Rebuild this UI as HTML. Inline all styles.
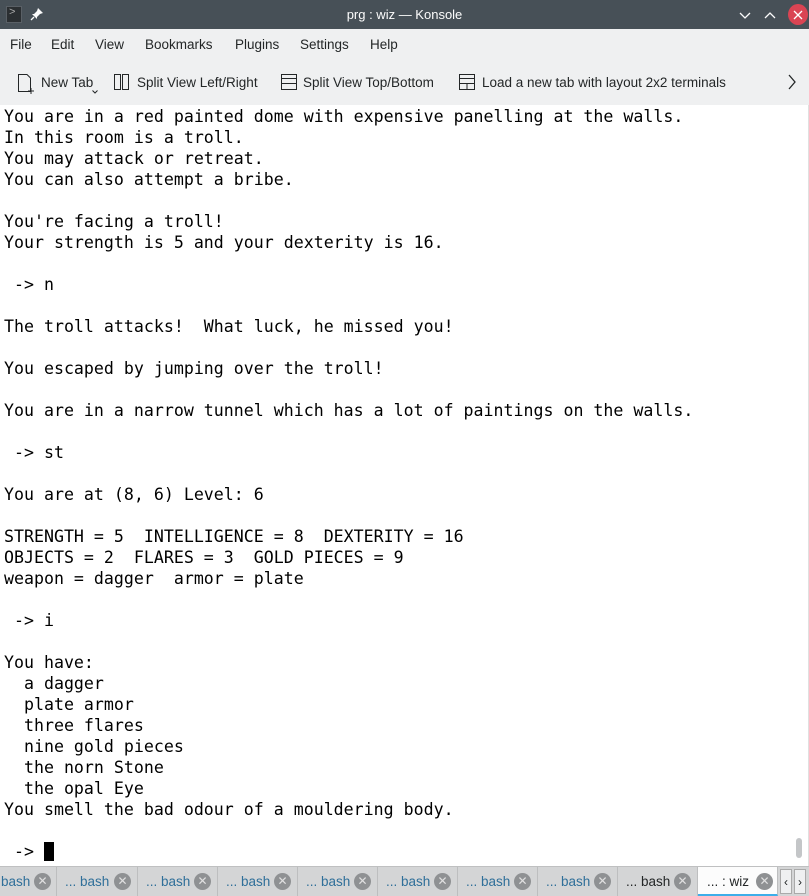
<!DOCTYPE html>
<html><head><meta charset="utf-8">
<style>
*{margin:0;padding:0;box-sizing:border-box}
body{width:809px;height:896px;overflow:hidden;background:#fff;font-family:"Liberation Sans",sans-serif;position:relative}
#title{position:absolute;left:0;top:0;width:809px;height:29px;background:#475057;color:#fcfcfc;font-size:13px}
#title .t{position:absolute;left:0;right:0;top:7px;text-align:center}
#menu{position:absolute;top:29px;left:0;width:809px;height:31px;background:#eff0f1;font-size:13.5px;color:#232627}
#menu span{position:absolute;top:8px}
#tool{position:absolute;top:60px;left:0;width:809px;height:45px;background:#eff0f1;font-size:13.5px;color:#232627}
#tool span{position:absolute;top:15px}
#term{position:absolute;top:106px;left:4px;font-family:"DejaVu Sans Mono","Liberation Mono",monospace;font-size:16.6px;line-height:21px;color:#000;white-space:pre}
#tabs{position:absolute;top:866px;left:0;width:809px;height:30px;background:#d4d5d6;border-top:1px solid #bfc0c1;font-size:13.5px}
.tab{position:absolute;top:0;height:29px;border-right:1px solid #bdbebf;color:#2f6f99}
.tab .l{position:absolute;top:7px}
.tab .x{position:absolute;top:6px;width:17px;height:17px;border-radius:50%;background:#8f9193;color:#e0e0e0;font-size:12px;text-align:center;line-height:17px}
</style></head><body>
<div id="title">
<div style="position:absolute;left:6px;top:6px;width:16px;height:17px;background:#2b2f32;border:1px solid #5a6066"></div>
<span style="position:absolute;left:9px;top:6px;font-size:11px;color:#aaa">&gt;</span>
<svg style="position:absolute;left:30px;top:7px" width="14" height="14"><path d="M8 1L13 6L10 7L7 10L7 12L2 7L4 7L7 4Z" fill="#fcfcfc"/><path d="M4 10L1 13" stroke="#fcfcfc" stroke-width="1.3"/></svg>
<div class="t">prg : wiz — Konsole</div>
<svg style="position:absolute;left:738px;top:9px" width="60" height="14"><polyline points="2,4 7,9 12,4" fill="none" stroke="#fcfcfc" stroke-width="1.3"/><polyline points="27,9 32,4 37,9" fill="none" stroke="#fcfcfc" stroke-width="1.3"/></svg>
<div style="position:absolute;left:788px;top:4px;width:20px;height:21px;border-radius:50%;background:#da4453"></div>
<svg style="position:absolute;left:792px;top:9px" width="12" height="12"><path d="M2 2L10 10M10 2L2 10" stroke="#fff" stroke-width="1.3"/></svg>
</div>
<div id="menu"><span style="left:10px">File</span><span style="left:51px">Edit</span><span style="left:95px">View</span><span style="left:145px">Bookmarks</span><span style="left:235px">Plugins</span><span style="left:300px">Settings</span><span style="left:370px">Help</span></div>
<div id="tool">
<svg style="position:absolute;left:17px;top:13px" width="20" height="22"><path d="M1.5 1.5H10L13.5 5V18.5H1.5Z" fill="none" stroke="#232627"/><path d="M14 15V21M11 18H17" stroke="#232627"/></svg>
<span style="left:41px">New Tab</span>
<svg style="position:absolute;left:92px;top:30px" width="6" height="4"><polyline points="0.5,0.5 3,3 5.5,0.5" fill="none" stroke="#232627"/></svg>
<svg style="position:absolute;left:113px;top:13px" width="18" height="18"><rect x="1.5" y="1.5" width="6" height="15" fill="none" stroke="#232627"/><rect x="9.5" y="1.5" width="6" height="15" fill="none" stroke="#232627"/></svg>
<span style="left:137px">Split View Left/Right</span>
<svg style="position:absolute;left:280px;top:13px" width="18" height="18"><rect x="1.5" y="1.5" width="15" height="15" fill="none" stroke="#232627"/><path d="M1 5.5H17M1 10.5H17" stroke="#232627"/></svg>
<span style="left:303px">Split View Top/Bottom</span>
<svg style="position:absolute;left:458px;top:13px" width="18" height="18"><rect x="1.5" y="1.5" width="15" height="15" fill="none" stroke="#232627"/><path d="M1 5.5H17M1 10.5H17M9 10V17" stroke="#232627"/></svg>
<span style="left:482px">Load a new tab with layout 2x2 terminals</span>
<svg style="position:absolute;left:786px;top:13px" width="12" height="18"><polyline points="3,2 9,9 3,16" fill="none" stroke="#232627" stroke-width="1.3"/></svg>
</div>
<div id="term">You are in a red painted dome with expensive panelling at the walls.
In this room is a troll.
You may attack or retreat.
You can also attempt a bribe.

You're facing a troll!
Your strength is 5 and your dexterity is 16.

 -&gt; n

The troll attacks!  What luck, he missed you!

You escaped by jumping over the troll!

You are in a narrow tunnel which has a lot of paintings on the walls.

 -&gt; st

You are at (8, 6) Level: 6

STRENGTH = 5  INTELLIGENCE = 8  DEXTERITY = 16
OBJECTS = 2  FLARES = 3  GOLD PIECES = 9
weapon = dagger  armor = plate

 -&gt; i

You have:
  a dagger
  plate armor
  three flares
  nine gold pieces
  the norn Stone
  the opal Eye
You smell the bad odour of a mouldering body.

 -&gt; <span style="background:#000">&#160;</span></div>
<div style="position:absolute;left:796px;top:838px;width:6px;height:20px;border-radius:3px;background:#c4c6c8"></div>
<div style="position:absolute;left:808px;top:105px;width:1px;height:761px;background:#e0e0e0"></div>
<div id="tabs">
<div class="tab" style="left:0;width:57px"><span class="l" style="left:1px">bash</span><span class="x" style="left:34px">&#x2715;</span></div>
<div class="tab" style="left:57px;width:81px"><span class="l" style="left:8px">... bash</span><span class="x" style="left:57px">&#x2715;</span></div>
<div class="tab" style="left:138px;width:80px"><span class="l" style="left:8px">... bash</span><span class="x" style="left:56px">&#x2715;</span></div>
<div class="tab" style="left:218px;width:80px"><span class="l" style="left:8px">... bash</span><span class="x" style="left:56px">&#x2715;</span></div>
<div class="tab" style="left:298px;width:80px"><span class="l" style="left:8px">... bash</span><span class="x" style="left:56px">&#x2715;</span></div>
<div class="tab" style="left:378px;width:80px"><span class="l" style="left:8px">... bash</span><span class="x" style="left:56px">&#x2715;</span></div>
<div class="tab" style="left:458px;width:80px"><span class="l" style="left:8px">... bash</span><span class="x" style="left:56px">&#x2715;</span></div>
<div class="tab" style="left:538px;width:80px"><span class="l" style="left:8px">... bash</span><span class="x" style="left:56px">&#x2715;</span></div>
<div class="tab" style="left:618px;width:80px;color:#232627"><span class="l" style="left:8px">... bash</span><span class="x" style="left:56px">&#x2715;</span></div>
<div class="tab" style="left:698px;width:80px;background:#fcfcfc;color:#232627;border-bottom:2px solid #3daee9"><span class="l" style="left:9px">... : wiz</span><span class="x" style="left:58px">&#x2715;</span></div>
<div style="position:absolute;left:780px;top:2px;width:12px;height:25px;border:1px solid #aaa;background:#eff0f1;font-size:12px;text-align:center;line-height:24px;color:#232627">&#x2039;</div>
<div style="position:absolute;left:794px;top:2px;width:12px;height:25px;border:1px solid #aaa;background:#eff0f1;font-size:12px;text-align:center;line-height:24px;color:#232627">&#x203A;</div>
</div>
</body></html>
